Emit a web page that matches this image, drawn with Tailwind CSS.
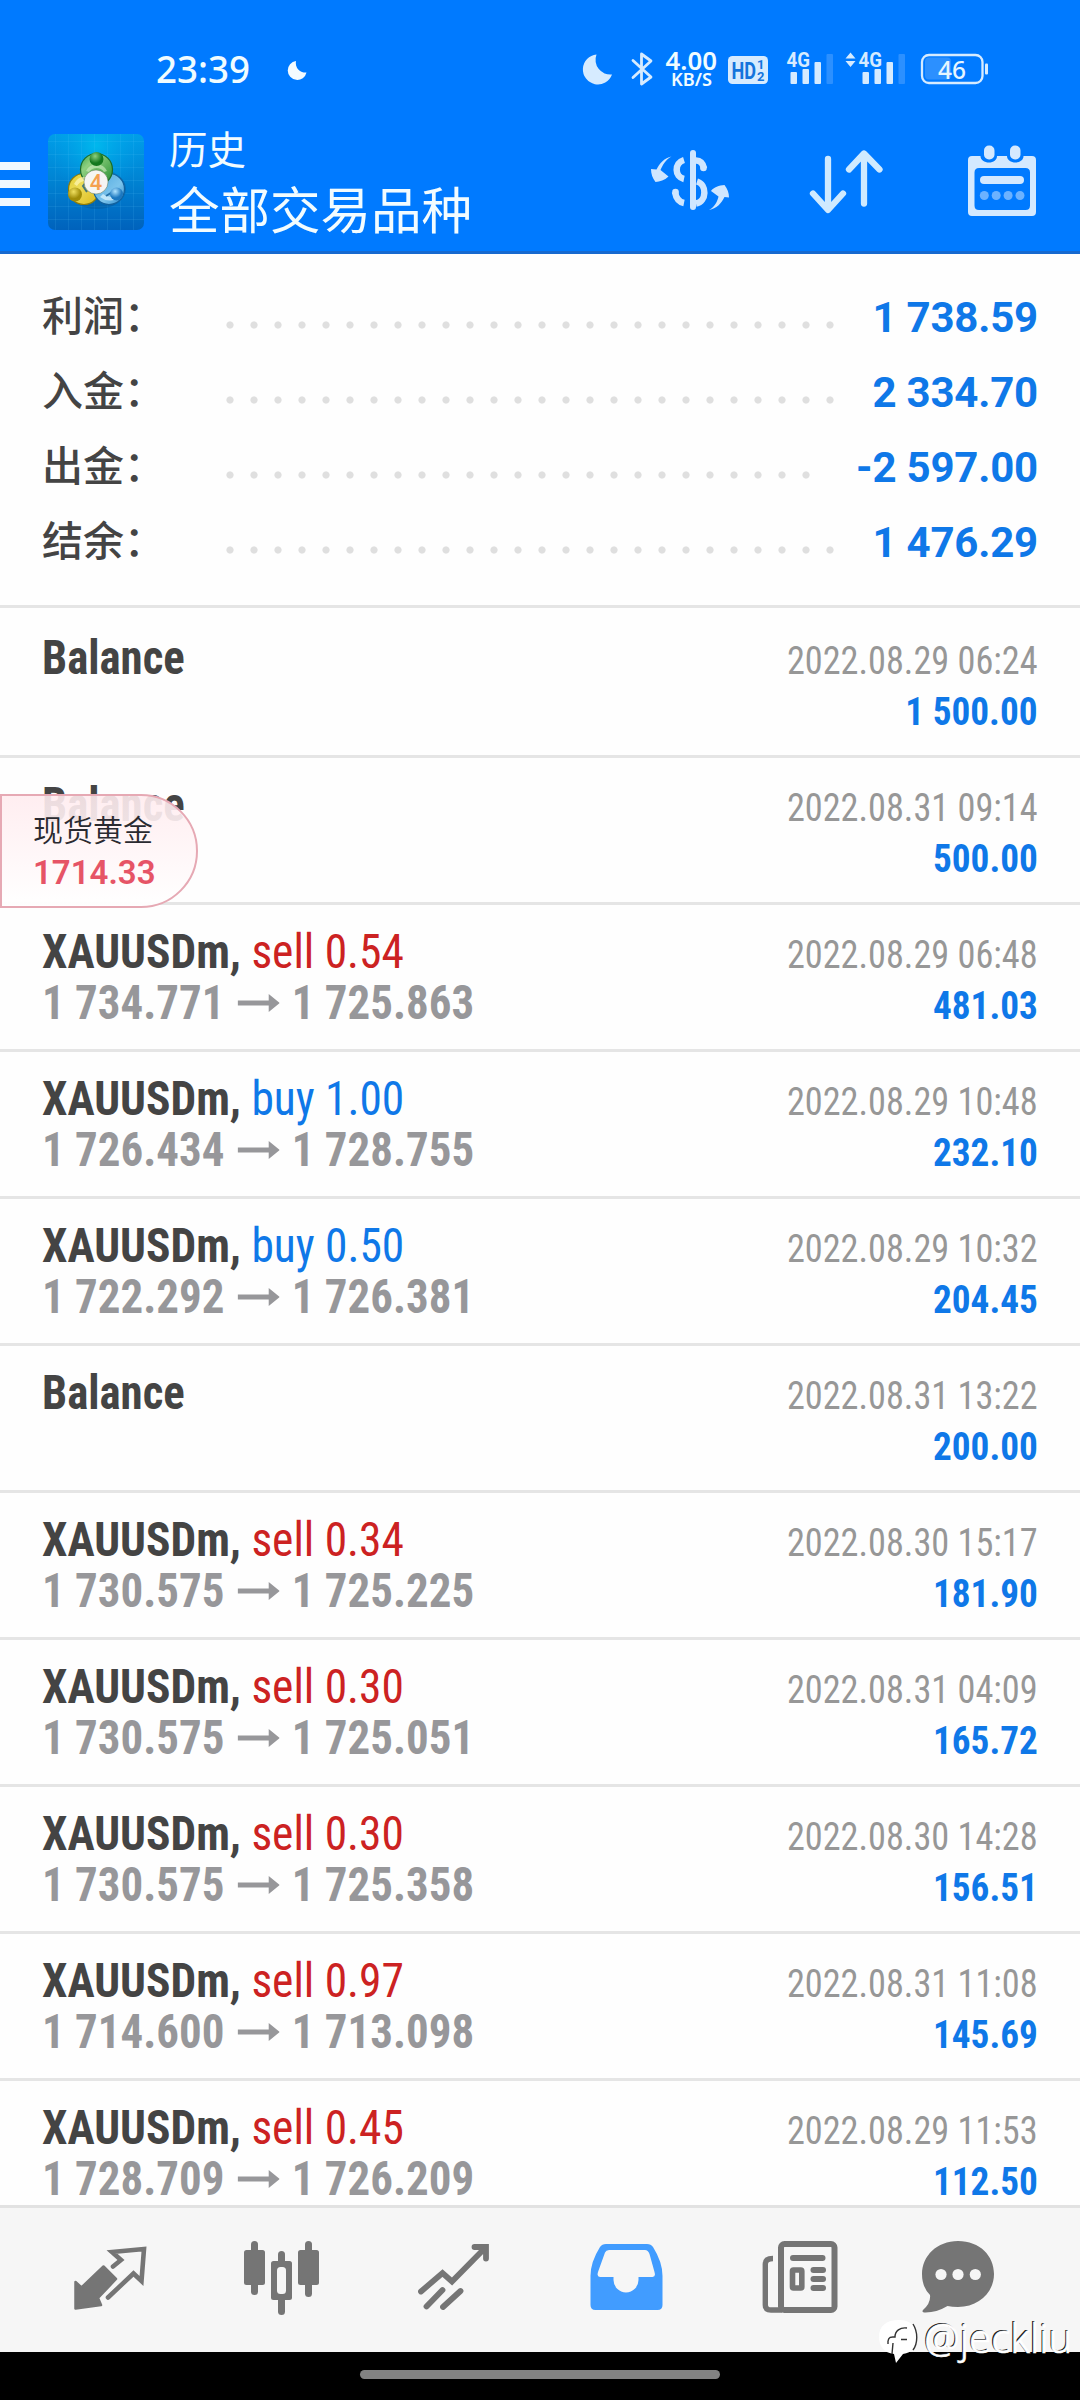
<!DOCTYPE html>
<html lang="zh-CN">
<head>
<meta charset="utf-8">
<title>历史</title>
<script src="https://cdn.jsdelivr.net/npm/@tailwindcss/browser@4"></script>
</head>
<body class="bg-black">
<div class="relative flex h-[2400px] w-[1080px] flex-col overflow-hidden bg-[#fefefe] font-[Roboto,'Noto_Sans_CJK_SC',sans-serif]">

  <header class="flex h-[254px] shrink-0 flex-col border-b-[3px] border-[#1769cf] bg-[#007aff]">
    <!-- status bar -->
    <div class="flex h-[104px] shrink-0 justify-between">
      <svg class="h-[104px] w-[320px]" viewBox="0 0 320 104">
        <text x="156" y="83" class="font-['Noto_Sans'] text-[38px] font-medium" fill="#f0fcff" textLength="94" lengthAdjust="spacingAndGlyphs">23:39</text>
        <path d="M296 61a9.500 9.500 0 1 0 10.500 11.500A9.500 9.500 0 0 1 296 61z" fill="#f4fbff"/>
      </svg>
      <svg class="h-[104px] w-[540px]" viewBox="540 0 540 104">
        <path d="M596.500 54.500A15 15 0 1 0 612 74.500A14.800 14.800 0 0 1 596.500 54.500z" fill="#d6ebff"/>
        <path d="M633 60.500L651 77L641.500 84V54L651 61L633 77.500" fill="none" stroke="#d6ebff" stroke-width="2.800" stroke-linejoin="round" stroke-linecap="round"/>
        <g fill="#f0fcff" class="font-['Noto_Sans'] font-bold">
          <text x="665.500" y="69.500" class="text-[25px] font-semibold" textLength="51.500" lengthAdjust="spacingAndGlyphs">4.00</text>
          <text x="671" y="86" class="text-[18.500px] font-semibold" textLength="41" lengthAdjust="spacingAndGlyphs">KB/S</text>
        </g>
        <rect x="728" y="56" width="40" height="28" rx="4.500" fill="#d6ebff"/>
        <g fill="#1474dc" class="font-[Roboto] font-bold">
          <text x="731.500" y="78.500" class="text-[24px]" textLength="24.500" lengthAdjust="spacingAndGlyphs">HD</text>
          <text x="757" y="68.500" class="text-[13px]">1</text>
          <text x="757" y="80.500" class="text-[13px]">2</text>
        </g>
        <g fill="#d6ebff">
          <text x="786.500" y="67" class="font-[Roboto] text-[20.500px] font-bold" textLength="23.500" lengthAdjust="spacingAndGlyphs">4G</text>
          <rect x="790.500" y="72" width="6.500" height="12" rx="1"/>
          <rect x="802.500" y="69" width="6.500" height="15" rx="1"/>
          <rect x="814.500" y="62" width="6.500" height="22" rx="1"/>
          <rect x="826.500" y="54" width="6.500" height="30" rx="1" fill="#2c90ff"/>
          <path d="M850.500 52.500l5 6h-10zM850.500 67l5-6h-10z"/>
          <text x="858.500" y="67" class="font-[Roboto] text-[20.500px] font-bold" textLength="23.500" lengthAdjust="spacingAndGlyphs">4G</text>
          <rect x="862.500" y="72" width="6.500" height="12" rx="1"/>
          <rect x="874.500" y="69" width="6.500" height="15" rx="1"/>
          <rect x="886.500" y="62" width="6.500" height="22" rx="1"/>
          <rect x="898.500" y="54" width="6.500" height="30" rx="1" fill="#2c90ff"/>
          <rect x="985" y="63.500" width="3" height="11" rx="1"/>
        </g>
        <rect x="925" y="57.500" width="26" height="22" rx="4" fill="#2c90ff"/>
        <rect x="922" y="55" width="60.500" height="28" rx="7" fill="none" stroke="#d6ebff" stroke-width="2.300"/>
        <text x="938" y="78.500" class="font-['Noto_Sans'] text-[25px] font-medium" fill="#e6f6ff" textLength="28" lengthAdjust="spacingAndGlyphs">46</text>
      </svg>
    </div>
    <!-- app bar -->
    <div class="flex h-[147px]">
      <div class="flex w-[30px] flex-col gap-[10px] pt-[58px]">
        <div class="h-2 bg-[#f0f8ff]"></div><div class="h-2 bg-[#f0f8ff]"></div><div class="h-2 bg-[#f0f8ff]"></div>
      </div>
      <svg class="mt-[30px] ml-[18px] size-24" viewBox="0 0 96 96">
        <defs>
          <linearGradient id="bg" x2="0" y2="1"><stop stop-color="#009ee8"/><stop offset=".5" stop-color="#0082d2"/><stop offset="1" stop-color="#0062bc"/></linearGradient>
          <radialGradient id="glow" cx=".5" cy=".12" r=".5"><stop stop-color="#00c0f0" stop-opacity=".8"/><stop offset="1" stop-color="#00a0e8" stop-opacity="0"/></radialGradient>
          <radialGradient id="gg" cx=".4" cy=".3"><stop stop-color="#8ed080"/><stop offset="1" stop-color="#14781e"/></radialGradient>
          <radialGradient id="gy" cx=".4" cy=".3"><stop stop-color="#f0e060"/><stop offset="1" stop-color="#a08c08"/></radialGradient>
          <radialGradient id="gb" cx=".4" cy=".3"><stop stop-color="#b0e4ff"/><stop offset="1" stop-color="#1c78c0"/></radialGradient>
          <linearGradient id="rg" x2="1" y2="1"><stop stop-color="#3aa64c"/><stop offset=".3" stop-color="#8fd080"/><stop offset="1" stop-color="#1f8a2c"/></linearGradient>
          <linearGradient id="ry" x2="1" y2="1"><stop stop-color="#e0cc30"/><stop offset=".4" stop-color="#ecdc58"/><stop offset="1" stop-color="#dcb818"/></linearGradient>
          <linearGradient id="rb" x2="1" y2="1"><stop stop-color="#4aa4dc"/><stop offset=".6" stop-color="#7cc4ec"/><stop offset="1" stop-color="#2888cc"/></linearGradient>
        </defs>
        <rect width="96" height="96" rx="7" fill="url(#bg)"/><rect width="96" height="96" rx="7" fill="url(#glow)"/>
        <path d="M7.500 0v96M20.500 0v96M33.500 0v96M46.500 0v96M59.500 0v96M72.500 0v96M85.500 0v96M0 7.500h96M0 20.500h96M0 33.500h96M0 46.500h96M0 59.500h96M0 72.500h96M0 85.500h96" stroke="#6cf" stroke-opacity=".12"/>
        <ellipse cx="49" cy="55" rx="29" ry="20" fill="#024a80" opacity=".3"/>
        <circle cx="36" cy="55" r="15.500" fill="url(#ry)" stroke="#8c7c0c" stroke-width="1.200"/>
        <circle cx="61" cy="55" r="15.500" fill="url(#rb)" stroke="#12619e" stroke-width="1.200"/>
        <circle cx="48.500" cy="35.500" r="16" fill="url(#rg)" stroke="#1c6c28" stroke-width="1.200"/>
        <path d="M38 37a11.500 11.500 0 0 1 21 0l-3 1a9 9 0 0 0-15 0z" fill="#d4f0c4" opacity=".6"/>
        <path d="M26 50q4-8 11-7l-1 4q-5 1-7 5z" fill="#fdf8b8" opacity=".7"/>
        <path d="M52 63q8 6 16 2l-2-3q-6 2-11-2z" fill="#e0f6ff" opacity=".7"/>
        <path d="M39 58l-4-6 3-4M58 62l8-5" stroke="#04508c" stroke-width="2" fill="none" opacity=".7"/>
        <circle cx="48.500" cy="25" r="7" fill="url(#gg)"/><circle cx="27" cy="60.500" r="7" fill="url(#gy)"/><circle cx="68.500" cy="60" r="6.500" fill="url(#gb)"/>
        <circle cx="48" cy="48" r="12" fill="#f5f5f3" stroke="#3b5a30" stroke-opacity=".5" stroke-width=".8"/>
        <text x="48" y="56" text-anchor="middle" class="font-['Noto_Sans'] text-[21px] font-semibold" fill="#f4a050">4</text>
      </svg>
      <div class="ml-[25px] flex w-[460px] flex-col pt-[14px] font-['Noto_Sans_CJK_SC',sans-serif] text-[#f2fcff]">
        <span class="text-[38.500px] leading-[59px]">历史</span>
        <span class="text-[50.500px] leading-[61px]">全部交易品种</span>
      </div>
      <svg class="ml-[11px] h-[146px] w-[100px]" viewBox="640 104 100 146" fill="#cfe6ff">
        <path d="M671.500 156.500c-6 3-9 9-11 13.500l8 6.500c-4 4-8.500 5-13 5.500c-3-4-4.500-8-4.500-13l5.500.5c3-6.500 8-11.500 15-13z"/>
        <path d="M709 210c6-3 8.500-9 9.500-13.500l-7.500-5.500c3-4 8-5.500 13.500-6c3 4 4.500 8 4.500 12.500l-4.500-.5c-3 6.500-8 11.500-15.500 13z"/>
        <path d="M684 160c-10 3-9.500 17 0 19M675 192c1 6 4 10 9 11" fill="none" stroke="#cfe6ff" stroke-width="6.500"/>
        <path d="M696 160.500c4 0 7 3 8 8M697 181.500c10 3 10 20-1 22" fill="none" stroke="#cfe6ff" stroke-width="6.500"/>
        <circle cx="675.500" cy="192" r="3.300"/><circle cx="703.500" cy="168" r="3.300"/>
        <path d="M693 153V207" stroke="#cfe6ff" stroke-width="6" stroke-linecap="round"/>
      </svg>
      <svg class="ml-[59px] h-[146px] w-[92px]" viewBox="799 104 92 146" fill="none" stroke="#cfeaff" stroke-width="6.300" stroke-linecap="round" stroke-linejoin="round">
        <path d="M828 159V209M813 193.500L828 210L843 193.500M864 203.500V154M849 169.500L864 153.500L879.500 169.500"/>
      </svg>
      <svg class="ml-[67px] h-[146px] w-[90px]" viewBox="958 104 90 146">
        <path fill="#d4e9ff" fill-rule="evenodd" d="M972 156h8.500c0 4 4 6.500 8.500 6.500s8-2.500 8-6.500h10c0 4 4 6.500 8.500 6.500s8-2.500 8-6.500h8.500q4 0 4 4v52q0 4-4 4h-60q-4 0-4-4v-52q0-4 4-4zM979 168q-4.500 0-4.500 4.500v33q0 4.500 4.500 4.500h46.500q4.500 0 4.500-4.500v-33q0-4.500-4.500-4.500z"/>
        <g fill="#d4e9ff"><rect x="984" y="145.500" width="10.500" height="14" rx="5"/><rect x="1010" y="145.500" width="10.500" height="14" rx="5"/><rect x="980" y="176" width="44" height="8" rx="4"/></g>
        <g fill="#6cb2ff"><circle cx="984.300" cy="195.500" r="4.500"/><circle cx="996.200" cy="195.500" r="4.500"/><circle cx="1008.100" cy="195.500" r="4.500"/><circle cx="1020" cy="195.500" r="4.500"/></g>
      </svg>
    </div>
  </header>

  <!-- totals -->
  <section id="totals" class="flex h-[354px] shrink-0 flex-col border-b-[3px] border-[#e5e5e5] px-[42px] pt-[26px]"></section>

  <!-- deals -->
  <main id="deals" class="flex h-[1597px] shrink-0 flex-col overflow-hidden pt-[3px]"></main>

  <nav class="flex h-[147px] shrink-0 border-t-[3px] border-[#e2e2e2] bg-[#f6f6f6] pl-[60px]">
    <svg class="h-36 w-[100px]" viewBox="60 2208 100 144">
      <path d="M103.500 2266.500L116 2279L98 2298L101 2305L75.500 2308.500V2282L81.500 2287.500z" fill="#757575" stroke="#757575" stroke-width="2.500" stroke-linejoin="round"/>
      <path d="M113 2266.500L121 2260L112 2252L144 2249L141.500 2281L133.500 2273.500L108 2297.500" fill="none" stroke="#757575" stroke-width="4.600" stroke-linecap="round"/>
    </svg>
    <svg class="ml-[71px] h-36 w-[100px]" viewBox="231 2208 100 144" fill="#757575">
      <rect x="251" y="2241" width="7" height="54" rx="3.500"/><rect x="244" y="2250" width="21" height="35" rx="2.500"/>
      <rect x="305" y="2241" width="7" height="56" rx="3.500"/><rect x="298" y="2250" width="21" height="35" rx="2.500"/>
      <rect x="278" y="2251" width="7" height="64" rx="3.500"/><rect x="271" y="2261" width="21" height="39" rx="2.500"/>
      <rect x="277" y="2267" width="9" height="27" rx="3.500" fill="#f6f6f6"/>
    </svg>
    <svg class="ml-[73px] h-36 w-[100px]" viewBox="404 2208 100 144" fill="none" stroke="#757575" stroke-width="5.800" stroke-linecap="round">
      <path d="M421 2291.500L442.500 2273L452 2281.500L485 2248M474.500 2247H486V2258.500"/>
      <path d="M442.500 2290L426.500 2306.500M460.500 2291L443 2307"/>
    </svg>
    <svg class="ml-[72px] h-36 w-[100px]" viewBox="576 2208 100 144">
      <path fill="#419cff" fill-rule="evenodd" d="M606 2244H647Q651 2244 653 2247Q662.500 2262 662.500 2276V2305Q662.500 2310 657.500 2310H595.500Q590.500 2310 590.500 2305V2276Q590.500 2262 600 2247Q602 2244 606 2244zM609 2250Q606 2250 605 2252.500L598 2272Q596.500 2277 600 2277H613.500V2280A12.500 12.500 0 0 0 638.500 2280V2277H652.500Q656 2277 654.500 2272L649.500 2254Q648 2250 645 2250z"/>
    </svg>
    <svg class="ml-[74px] h-36 w-[100px]" viewBox="750 2208 100 144">
      <g fill="none" stroke="#757575"><rect x="781" y="2244" width="53.500" height="66" rx="3.500" stroke-width="6"/><path d="M773 2258.500Q765.300 2258.500 765.300 2264V2305Q765.300 2310 771 2310H782" stroke-width="5.400"/><rect x="792.500" y="2270" width="9.300" height="18" rx="1" stroke-width="5.600"/></g>
      <g fill="#757575"><rect x="790" y="2255" width="35.500" height="6" rx="3"/><rect x="810.500" y="2267" width="15.500" height="6" rx="3"/><rect x="810.500" y="2276" width="15.500" height="6" rx="3"/><rect x="810.500" y="2285" width="15.500" height="6" rx="3"/></g>
    </svg>
    <svg class="ml-[58px] h-36 w-[100px]" viewBox="908 2208 100 144">
      <path fill="#757575" d="M958 2241C980 2241 994 2256 994 2274C994 2292 979 2307 958 2307Q952 2307 947.500 2306Q936 2313 924 2312.500Q921.500 2312 923 2310Q931 2303 930 2295Q922 2287 922 2274C922 2256 937 2241 958 2241z"/>
      <g fill="#f6f6f6"><circle cx="941" cy="2274.500" r="5.600"/><circle cx="958" cy="2274.500" r="5.600"/><circle cx="975.300" cy="2274.500" r="5.600"/></g>
    </svg>
  </nav>
  <div class="flex h-12 shrink-0 justify-center bg-black pt-[18px]"><div class="h-[9px] w-[360px] rounded-full bg-[#828282]"></div></div>

  <!-- floating quote -->
  <aside class="absolute top-[794px] left-0 flex h-[114px] w-[198px] flex-col rounded-r-[57px] border-2 border-[#e6a9b4] bg-linear-to-b from-[#ffecef]/90 to-white/95 pt-[14px] pl-[31px]">
    <span class="font-['Noto_Sans_CJK_SC',sans-serif] text-[30px] leading-[36px] font-[350] text-[#2a2a30]">现货黄金</span>
    <span class="mt-[7px] text-[33px] leading-[40px] font-semibold text-[#e65466]">1714.33</span>
  </aside>

  <!-- user mark -->
  <div class="absolute top-[2312px] left-[876px]">
    <svg class="h-[56px] w-[204px]" viewBox="876 2312 204 56">
      <path d="M899 2320c12 0 18 7 18 17c0 9-5 16-14 17l-7 9l-2-9c-10-1-15-8-15-17c0-11 7-17 20-17z" fill="#fff"/>
      <path d="M913 2324c5 8 5 19 0 26M888 2341c1-5 4-4 7-4c0-6 5-10 12-9M888 2341v3M901 2339.500h6M893 2343l-1 11" fill="none" stroke="#333" stroke-width="1.400"/>
      <g class="font-['Noto_Sans'] text-[41px] font-light">
        <text x="923" y="2351.500" fill="#222" textLength="148" lengthAdjust="spacingAndGlyphs">@jeckliu</text>
        <text x="924.300" y="2352.800" fill="#fff" stroke="#fff" stroke-width=".6" textLength="148" lengthAdjust="spacingAndGlyphs" aria-hidden="true">@jeckliu</text>
      </g>
    </svg>
  </div>
</div>

<script>
const totals = [['利润','1 738.59','w-[608px]'],['入金','2 334.70','w-[608px]'],['出金','-2 597.00','w-[584px]'],['结余','1 476.29','w-[608px]']];
document.getElementById('totals').innerHTML = totals.map(([k, v, w]) => `
  <div class="flex h-[75px] items-center text-[42px]">
    <span class="-mt-[7px] w-[184px] shrink-0 font-['Noto_Sans_CJK_SC',sans-serif] text-[41px] font-medium text-[#444]">${k}：</span>
    <i class="mt-3.5 h-2 ${w} shrink-0 bg-[radial-gradient(circle_at_4px_4px,#dfdfdf_3.2px,transparent_4px)] bg-[length:24px_8px]"></i>
    <b class="ml-auto tracking-[-0.2px] whitespace-nowrap text-[#0f78e8]">${v}</b>
  </div>`).join('');

const deals = [
  [null, '2022.08.29 06:24', '1 500.00'],
  [null, '2022.08.31 09:14', '500.00'],
  ['sell 0.54', '2022.08.29 06:48', '481.03', '1 734.771', '1 725.863'],
  ['buy 1.00', '2022.08.29 10:48', '232.10', '1 726.434', '1 728.755'],
  ['buy 0.50', '2022.08.29 10:32', '204.45', '1 722.292', '1 726.381'],
  [null, '2022.08.31 13:22', '200.00'],
  ['sell 0.34', '2022.08.30 15:17', '181.90', '1 730.575', '1 725.225'],
  ['sell 0.30', '2022.08.31 04:09', '165.72', '1 730.575', '1 725.051'],
  ['sell 0.30', '2022.08.30 14:28', '156.51', '1 730.575', '1 725.358'],
  ['sell 0.97', '2022.08.31 11:08', '145.69', '1 714.600', '1 713.098'],
  ['sell 0.45', '2022.08.29 11:53', '112.50', '1 728.709', '1 726.209'],
];
document.getElementById('deals').innerHTML = deals.map(([op, date, sum, from, to]) => `
  <div class="flex h-[147px] shrink-0 justify-between border-b-[3px] border-[#e5e5e5] px-[42px] font-stretch-75% whitespace-nowrap">
    <div class="flex flex-col items-start pt-[21px] text-[48px] leading-[51px] font-bold">
      ${op
        ? `<div class="origin-left scale-x-[0.946] text-[#444]">XAUUSDm, <span class="font-normal ${op[0] === 's' ? 'text-[#cc2222]' : 'text-[#0f78e8]'}">${op}</span></div>`
        : '<div class="origin-left scale-x-[0.933] text-[#444]">Balance</div>'}
      ${from ? `<div class="flex origin-left scale-x-[0.936] items-center text-[#97979a]">${from}
        <svg class="mr-[13px] ml-[14px] h-[18px] w-[45px]" viewBox="0 0 42 18" preserveAspectRatio="none"><path d="M0 6.500H31V0L42 9L31 18V11.500H0z" fill="#97979a"/></svg>${to}</div>` : ''}
    </div>
    <div class="flex flex-col items-end pt-[25px] text-[39px] leading-[51px]">
      <div class="origin-right scale-x-[0.93] text-[#979797]">${date}</div>
      <div class="origin-right scale-x-[0.955] font-bold text-[#0f78e8]">${sum}</div>
    </div>
  </div>`).join('');
</script>
</body>
</html>
